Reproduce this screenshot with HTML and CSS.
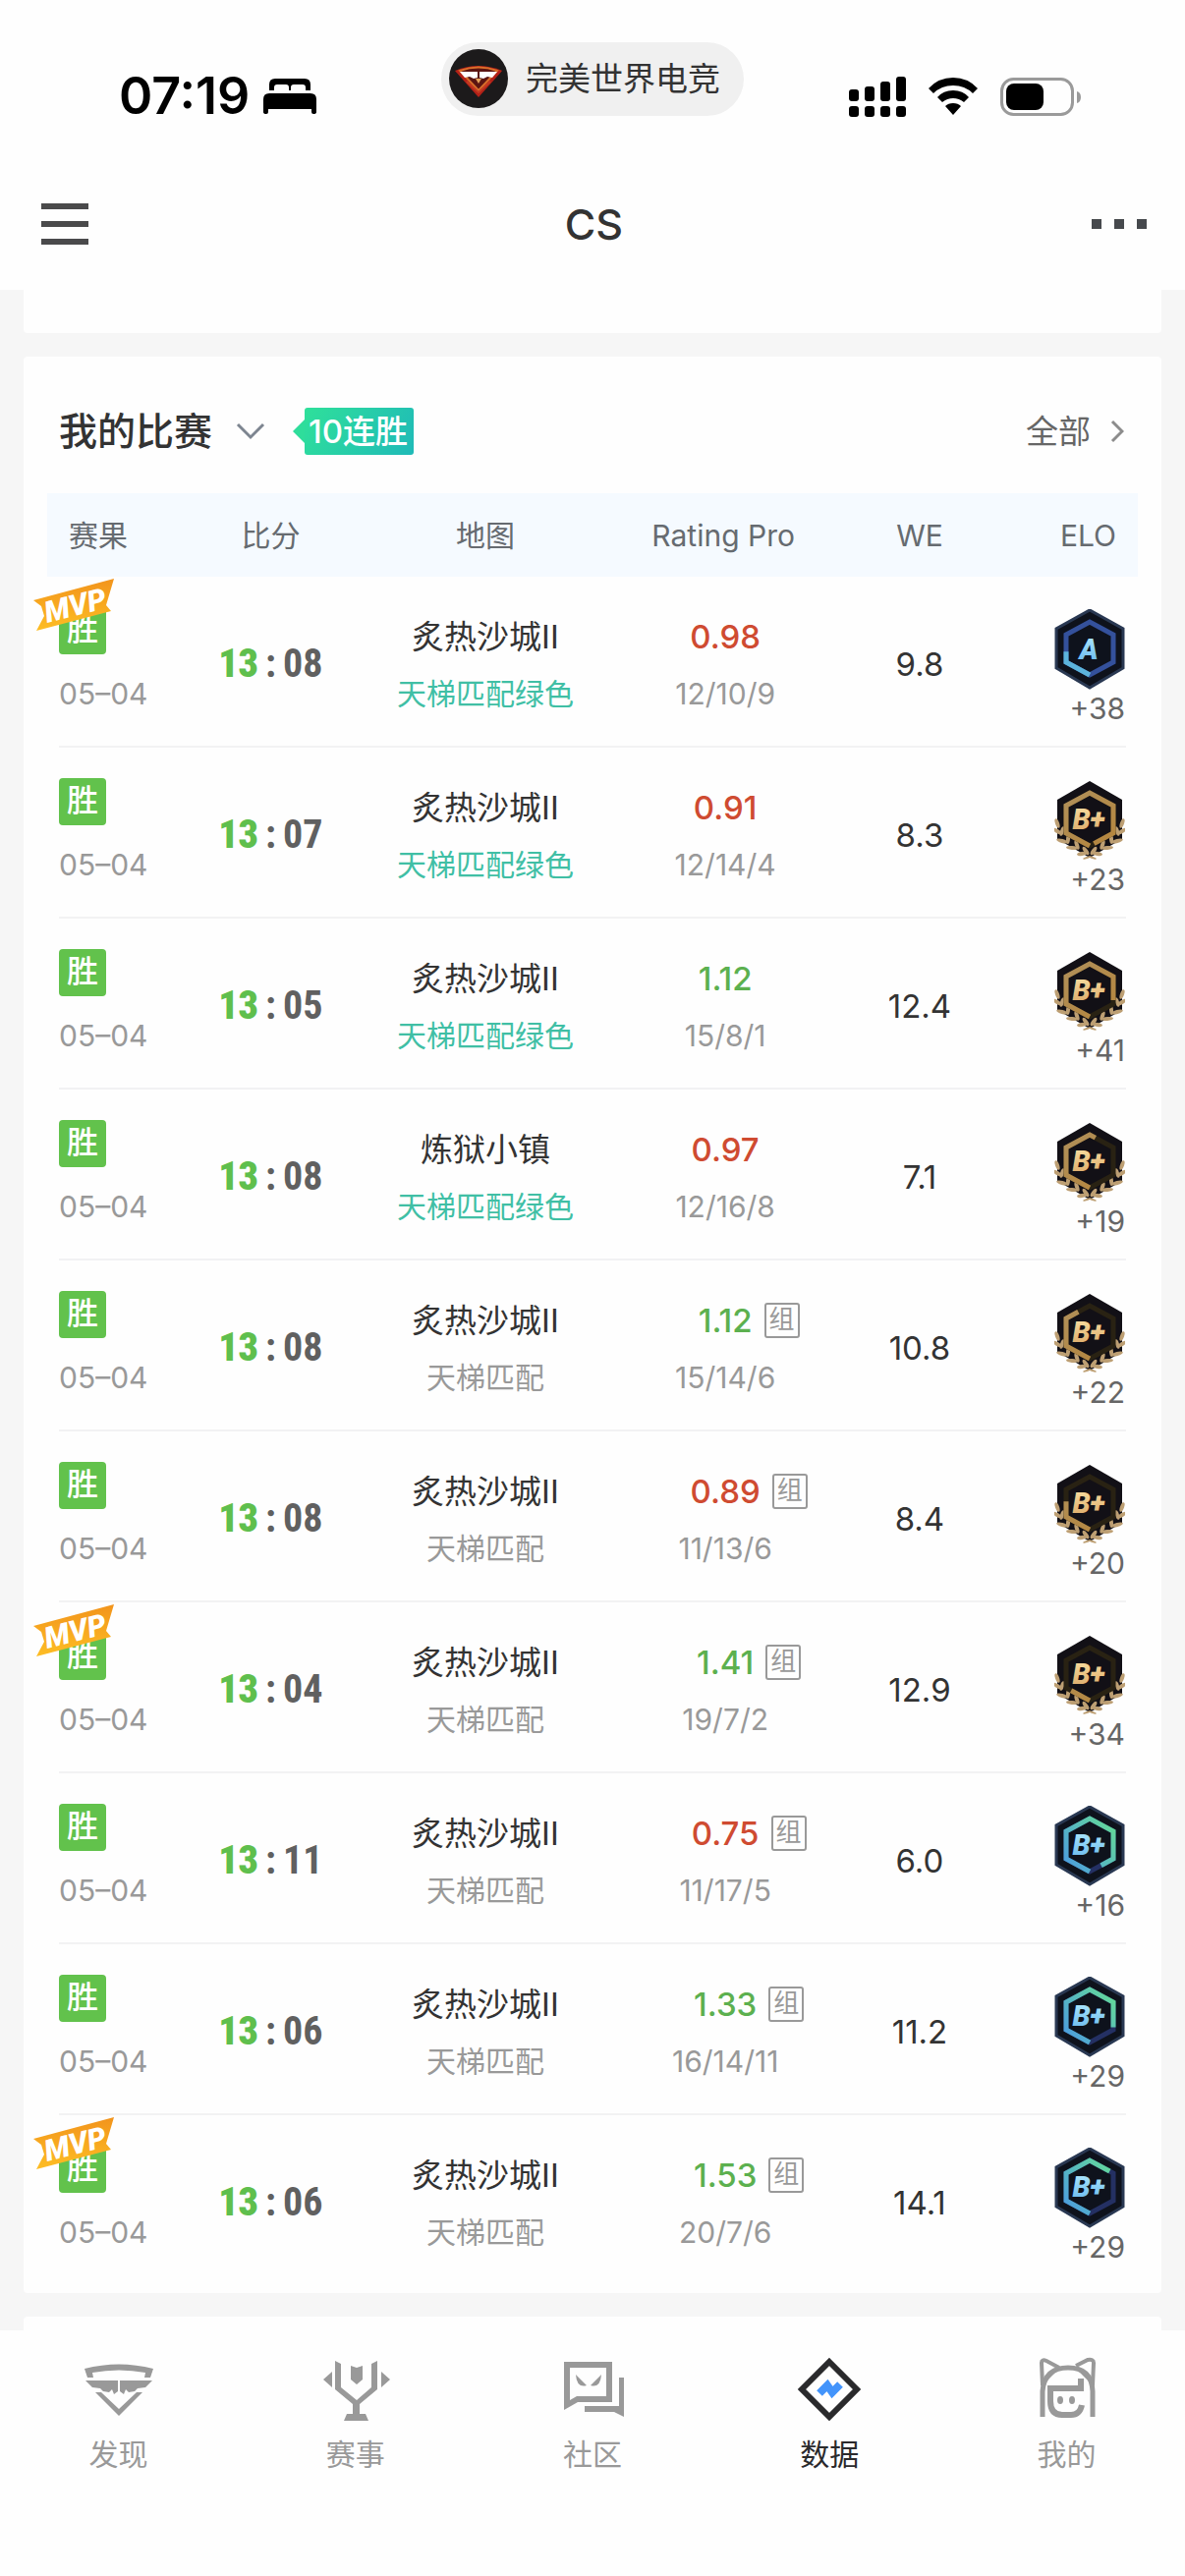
FILE: index.html
```html
<!DOCTYPE html>
<html lang="zh-CN">
<head>
<meta charset="utf-8">
<meta name="viewport" content="width=device-width, initial-scale=1">
<title>CS</title>
<link rel="stylesheet" href="styles.css">
</head>
<body>

<svg class="sprite" aria-hidden="true">
  <defs>
    <linearGradient id="ice" x1="0" y1="0" x2="0" y2="1"><stop offset="0" stop-color="#b4ecff"/><stop offset="1" stop-color="#62b4ec"/></linearGradient>
    <linearGradient id="gold" x1="0" y1="0" x2="0" y2="1"><stop offset="0" stop-color="#fbe3a6"/><stop offset="1" stop-color="#d9a463"/></linearGradient>
    <linearGradient id="ring-cool" gradientUnits="userSpaceOnUse" x1="14" y1="60" x2="60" y2="24"><stop offset="0" stop-color="#4d9fdc"/><stop offset="1" stop-color="#62d69c"/></linearGradient>
    <linearGradient id="ring-gold" gradientUnits="userSpaceOnUse" x1="12" y1="12" x2="60" y2="68"><stop offset="0" stop-color="#b0905a"/><stop offset="1" stop-color="#b5853c"/></linearGradient>
    <linearGradient id="ribbon" x1="0" y1="0" x2="0" y2="1"><stop offset="0" stop-color="#f2941c"/><stop offset="1" stop-color="#fdbd24"/></linearGradient>
    <symbol id="ring" viewBox="0 0 72 82"><path pathLength="100" d="M36 67L12 54V26L36 13L60 26V54Z" fill="none" stroke-width="5"/></symbol>
    <symbol id="hex-blue" viewBox="0 0 72 82"><path d="M36 1L70 20V60L36 80L2 60V20Z" fill="#0e121c" stroke="#293852" stroke-width="3"/></symbol>
    <symbol id="hex-gold" viewBox="0 0 72 82">
      <path d="M36 1L69 20V60L36 79L3 60V20Z" fill="#121016"/>
      <g id="laurel" fill="#bd9f73">
        <ellipse cx="3" cy="44" rx="2" ry="5" transform="rotate(-20 3 44)"/>
        <ellipse cx="3" cy="52" rx="2" ry="5" transform="rotate(-58 3 52)"/>
        <ellipse cx="8" cy="52" rx="2" ry="5" transform="rotate(18 8 52)"/>
        <ellipse cx="8" cy="62" rx="2" ry="6" transform="rotate(-75 8 62)"/>
        <ellipse cx="14" cy="60" rx="2" ry="5" transform="rotate(5 14 60)"/>
        <ellipse cx="18" cy="69" rx="2" ry="6" transform="rotate(-85 18 69)"/>
        <ellipse cx="23" cy="66" rx="2" ry="5" transform="rotate(-20 23 66)"/>
        <ellipse cx="28" cy="75" rx="2" ry="5" transform="rotate(-100 28 75)"/>
        <ellipse cx="32" cy="72" rx="2" ry="5" transform="rotate(-35 32 72)"/>
        <ellipse cx="33" cy="79" rx="1" ry="4" transform="rotate(70 33 79)"/>
      </g>
      <use href="#laurel" transform="translate(72 0) scale(-1 1)"/>
    </symbol>
    <symbol id="mvp" viewBox="0 0 82 54">
      <path d="M0 22L82 0L74 27L79 33L3 53L11 38L8 28Z" fill="url(#ribbon)"/>
      <text x="14" y="45" transform="rotate(-14 14 45)" font-family="Roboto, sans-serif" font-weight="900" font-style="italic" font-size="30" fill="#fff">MVP</text>
    </symbol>
  </defs>
</svg>

<header class="top">
  <div class="status">
    <div class="status-left">
      <span class="clock">07:19</span>
      <svg width="54" height="36" viewBox="0 0 54 36" aria-hidden="true"><path d="M6 12V6Q6 0 12 0H42Q48 0 48 6V12H43V9Q43 6 40 6H31Q28 6 28 9V12H26V9Q26 6 23 6H14Q11 6 11 9V12Z"/><path d="M0 21Q0 15 6 15H48Q54 15 54 21V34Q54 36 51 36Q49 36 49 34V31H5V34Q5 36 3 36Q0 36 0 34Z"/></svg>
    </div>
    <div class="pill">
      <svg width="60" height="60" viewBox="0 0 60 60" aria-hidden="true"><circle cx="30" cy="30" r="30" fill="#1c1a1b"/><path d="M6 22Q30 12 54 22L30 49Z" fill="#b32118"/><path d="M11 22Q30 15 49 22L30 42Z" fill="#5b1512" stroke="#d9702b" stroke-width="2"/><path d="M18 33L30 44L42 33" fill="none" stroke="#c23a22" stroke-width="2"/><path d="M11 23H29V29L25 30L21 28L16 29ZM49 23H31V29L35 30L39 28L44 29Z" fill="#fff"/><path d="M27 30L30 35L33 30Z" fill="#e5a35b"/></svg>
      <span>完美世界电竞</span>
    </div>
    <div class="status-right">
      <svg width="58" height="41" viewBox="0 0 58 41" aria-hidden="true"><rect y="13" width="10" height="12" rx="3"/><rect x="16" y="10" width="10" height="15" rx="3"/><rect x="32" y="5" width="10" height="20" rx="3"/><rect x="48" width="10" height="25" rx="3"/><rect y="30" width="10" height="11" rx="3"/><rect x="16" y="30" width="10" height="11" rx="3"/><rect x="32" y="30" width="10" height="11" rx="3"/><rect x="48" y="30" width="10" height="11" rx="3"/></svg>
      <svg width="50" height="38" viewBox="0 0 50 38" aria-hidden="true"><path d="M0 11Q10 0 25 0T50 11L45 16Q37 8 25 8T5 16ZM9 20Q15 13 25 13T41 20L36 25Q31 21 25 21T14 25ZM17 29Q20 26 25 26T33 29L25 38Z"/></svg>
      <svg width="82" height="39" viewBox="0 0 82 39" aria-hidden="true"><rect x="1.500" y="1.500" width="72" height="36" rx="12" fill="none" stroke="#9a9a9a" stroke-width="3"/><rect x="6" y="6" width="38" height="27" rx="8"/><path d="M78 14Q82 15 82 20T78 26Z" fill="#9a9a9a"/></svg>
    </div>
  </div>
  <nav class="navbar" aria-label="页面">
    <button class="icon-btn" type="button" aria-label="菜单"><svg width="48" height="42" viewBox="0 0 48 42"><path d="M0 3H48M0 21H48M0 39H48" stroke="#4a4a4b" stroke-width="6"/></svg></button>
    <h1>CS</h1>
    <button class="icon-btn more" type="button" aria-label="更多"><svg width="56" height="10" viewBox="0 0 56 10"><path d="M0 5H10M23 5H33M46 5H56" stroke="#46494d" stroke-width="10"/></svg></button>
  </nav>
</header>

<main>
  <section class="card card-prev"></section>

  <section class="card matches">
    <div class="matches-head">
      <button class="picker" type="button">我的比赛<svg width="30" height="18" viewBox="0 0 30 18" aria-hidden="true"><path d="M2 2L15 15L28 2" fill="none" stroke="#7d8590" stroke-width="3"/></svg></button>
      <span class="streak">10连胜</span>
      <a class="all" href="#all">全部<svg width="14" height="24" viewBox="0 0 14 24" aria-hidden="true"><path d="M2 2L12 12L2 22" fill="none" stroke="#8c8c8c" stroke-width="3"/></svg></a>
    </div>

    <table>
      <colgroup><col class="c-result"><col class="c-score"><col class="c-map"><col class="c-rating"><col class="c-we"><col class="c-elo"></colgroup>
      <thead>
        <tr><th class="result" scope="col">赛果</th><th scope="col">比分</th><th class="map" scope="col">地图</th><th scope="col">Rating Pro</th><th scope="col">WE</th><th class="elo" scope="col">ELO</th></tr>
      </thead>
      <tbody>
        <tr>
          <td class="result"><span class="win">胜<svg class="mvp"><use href="#mvp"/></svg></span><span class="sub">05–04</span></td>
          <td class="score"><span><b>13</b><i>:</i>08</span></td>
          <td class="map"><span class="name">炙热沙城II</span><span class="sub green-pool">天梯匹配绿色</span></td>
          <td class="rating"><span class="value low"><b>0.98</b></span><span class="sub">12/10/9</span></td>
          <td class="we">9.8</td>
          <td class="elo"><svg class="rank" viewBox="0 0 72 82"><use href="#hex-blue"/><use href="#ring" stroke="#34519c"/><use href="#ring" stroke="#5cb4dc" stroke-dasharray="23 100"/><text x="35" y="51" class="rank-text" fill="url(#ice)">A</text></svg><span class="delta">+38</span></td>
        </tr>
        <tr>
          <td class="result"><span class="win">胜</span><span class="sub">05–04</span></td>
          <td class="score"><span><b>13</b><i>:</i>07</span></td>
          <td class="map"><span class="name">炙热沙城II</span><span class="sub green-pool">天梯匹配绿色</span></td>
          <td class="rating"><span class="value low"><b>0.91</b></span><span class="sub">12/14/4</span></td>
          <td class="we">8.3</td>
          <td class="elo"><svg class="rank" viewBox="0 0 72 82"><use href="#hex-gold"/><use href="#ring" stroke="#292213"/><use href="#ring" stroke="url(#ring-gold)" stroke-dasharray="97 100"/><text x="35" y="50" class="rank-text" fill="url(#gold)">B+</text></svg><span class="delta">+23</span></td>
        </tr>
        <tr>
          <td class="result"><span class="win">胜</span><span class="sub">05–04</span></td>
          <td class="score"><span><b>13</b><i>:</i>05</span></td>
          <td class="map"><span class="name">炙热沙城II</span><span class="sub green-pool">天梯匹配绿色</span></td>
          <td class="rating"><span class="value high"><b>1.12</b></span><span class="sub">15/8/1</span></td>
          <td class="we">12.4</td>
          <td class="elo"><svg class="rank" viewBox="0 0 72 82"><use href="#hex-gold"/><use href="#ring" stroke="#292213"/><use href="#ring" stroke="url(#ring-gold)" stroke-dasharray="81 100"/><text x="35" y="50" class="rank-text" fill="url(#gold)">B+</text></svg><span class="delta">+41</span></td>
        </tr>
        <tr>
          <td class="result"><span class="win">胜</span><span class="sub">05–04</span></td>
          <td class="score"><span><b>13</b><i>:</i>08</span></td>
          <td class="map"><span class="name">炼狱小镇</span><span class="sub green-pool">天梯匹配绿色</span></td>
          <td class="rating"><span class="value low"><b>0.97</b></span><span class="sub">12/16/8</span></td>
          <td class="we">7.1</td>
          <td class="elo"><svg class="rank" viewBox="0 0 72 82"><use href="#hex-gold"/><use href="#ring" stroke="#292213"/><use href="#ring" stroke="url(#ring-gold)" stroke-dasharray="54 100"/><text x="35" y="50" class="rank-text" fill="url(#gold)">B+</text></svg><span class="delta">+19</span></td>
        </tr>
        <tr>
          <td class="result"><span class="win">胜</span><span class="sub">05–04</span></td>
          <td class="score"><span><b>13</b><i>:</i>08</span></td>
          <td class="map"><span class="name">炙热沙城II</span><span class="sub">天梯匹配</span></td>
          <td class="rating"><span class="value high"><b>1.12</b><em>组</em></span><span class="sub">15/14/6</span></td>
          <td class="we">10.8</td>
          <td class="elo"><svg class="rank" viewBox="0 0 72 82"><use href="#hex-gold"/><use href="#ring" stroke="#292213"/><use href="#ring" stroke="url(#ring-gold)" stroke-dasharray="42 100"/><text x="35" y="50" class="rank-text" fill="url(#gold)">B+</text></svg><span class="delta">+22</span></td>
        </tr>
        <tr>
          <td class="result"><span class="win">胜</span><span class="sub">05–04</span></td>
          <td class="score"><span><b>13</b><i>:</i>08</span></td>
          <td class="map"><span class="name">炙热沙城II</span><span class="sub">天梯匹配</span></td>
          <td class="rating"><span class="value low"><b>0.89</b><em>组</em></span><span class="sub">11/13/6</span></td>
          <td class="we">8.4</td>
          <td class="elo"><svg class="rank" viewBox="0 0 72 82"><use href="#hex-gold"/><use href="#ring" stroke="#292213"/><use href="#ring" stroke="url(#ring-gold)" stroke-dasharray="26 100"/><text x="35" y="50" class="rank-text" fill="url(#gold)">B+</text></svg><span class="delta">+20</span></td>
        </tr>
        <tr>
          <td class="result"><span class="win">胜<svg class="mvp"><use href="#mvp"/></svg></span><span class="sub">05–04</span></td>
          <td class="score"><span><b>13</b><i>:</i>04</span></td>
          <td class="map"><span class="name">炙热沙城II</span><span class="sub">天梯匹配</span></td>
          <td class="rating"><span class="value high"><b>1.41</b><em>组</em></span><span class="sub">19/7/2</span></td>
          <td class="we">12.9</td>
          <td class="elo"><svg class="rank" viewBox="0 0 72 82"><use href="#hex-gold"/><use href="#ring" stroke="#292213"/><use href="#ring" stroke="url(#ring-gold)" stroke-dasharray="13 100"/><text x="35" y="50" class="rank-text" fill="url(#gold)">B+</text></svg><span class="delta">+34</span></td>
        </tr>
        <tr>
          <td class="result"><span class="win">胜</span><span class="sub">05–04</span></td>
          <td class="score"><span><b>13</b><i>:</i>11</span></td>
          <td class="map"><span class="name">炙热沙城II</span><span class="sub">天梯匹配</span></td>
          <td class="rating"><span class="value low"><b>0.75</b><em>组</em></span><span class="sub">11/17/5</span></td>
          <td class="we">6.0</td>
          <td class="elo"><svg class="rank" viewBox="0 0 72 82"><use href="#hex-blue"/><use href="#ring" stroke="#243063"/><use href="#ring" stroke="url(#ring-cool)" stroke-dasharray="92 100"/><text x="35" y="50" class="rank-text" fill="url(#ice)">B+</text></svg><span class="delta">+16</span></td>
        </tr>
        <tr>
          <td class="result"><span class="win">胜</span><span class="sub">05–04</span></td>
          <td class="score"><span><b>13</b><i>:</i>06</span></td>
          <td class="map"><span class="name">炙热沙城II</span><span class="sub">天梯匹配</span></td>
          <td class="rating"><span class="value high"><b>1.33</b><em>组</em></span><span class="sub">16/14/11</span></td>
          <td class="we">11.2</td>
          <td class="elo"><svg class="rank" viewBox="0 0 72 82"><use href="#hex-blue"/><use href="#ring" stroke="#243063"/><use href="#ring" stroke="url(#ring-cool)" stroke-dasharray="82 100"/><text x="35" y="50" class="rank-text" fill="url(#ice)">B+</text></svg><span class="delta">+29</span></td>
        </tr>
        <tr>
          <td class="result"><span class="win">胜<svg class="mvp"><use href="#mvp"/></svg></span><span class="sub">05–04</span></td>
          <td class="score"><span><b>13</b><i>:</i>06</span></td>
          <td class="map"><span class="name">炙热沙城II</span><span class="sub">天梯匹配</span></td>
          <td class="rating"><span class="value high"><b>1.53</b><em>组</em></span><span class="sub">20/7/6</span></td>
          <td class="we">14.1</td>
          <td class="elo"><svg class="rank" viewBox="0 0 72 82"><use href="#hex-blue"/><use href="#ring" stroke="#243063"/><use href="#ring" stroke="url(#ring-cool)" stroke-dasharray="64 100"/><text x="35" y="50" class="rank-text" fill="url(#ice)">B+</text></svg><span class="delta">+29</span></td>
        </tr>
      </tbody>
    </table>
  </section>

  <section class="card card-next"></section>
</main>

<nav class="tabs" aria-label="主导航">
  <a href="#discover"><svg viewBox="0 0 72 72" aria-hidden="true"><path d="M1 15Q36 6 71 15L68 24H62L63 19Q36 14 9 19L10 24H4ZM2 27H35V38L31 41L29 36L26 39L20 38L17 35L9 34ZM70 27H37V38L41 41L43 36L46 39L52 38L55 35L63 34ZM12 39H18L36 56L54 39H60L36 63Z"/></svg>发现</a>
  <a href="#events"><svg viewBox="0 0 72 72" aria-hidden="true"><path d="M15 7L21 10V34L37 47L52 34V10L58 7V36L40 51V61H46L49 68H24L27 61H33V51L15 36ZM31 12L37 14L43 12V26L37 31L31 26ZM3 26L12 18V34ZM71 26L62 18V34Z"/></svg>赛事</a>
  <a href="#community"><svg viewBox="0 0 72 72" aria-hidden="true"><path fill-rule="evenodd" d="M7 8H56V49H21L7 57ZM13 14V47L20 43H50V14ZM19 21L30 32Q20 35 19 21ZM45 21L34 32Q44 35 45 21ZM63 24H68V64L58 59H28V53H63Z"/></svg>社区</a>
  <a class="active" href="#data" aria-current="page"><svg viewBox="0 0 72 72" aria-hidden="true"><path d="M36 8L64 36L36 64L8 36Z" fill="none" stroke="#2a2a2c" stroke-width="6"/><path d="M26 40L34 32L39 39L47 31" fill="none" stroke="#4394fb" stroke-width="8"/></svg>数据</a>
  <a href="#me"><svg viewBox="0 0 72 72" aria-hidden="true"><g fill="none" stroke="#999" stroke-width="5"><path d="M12 64V38Q14 14 38 14T63 38V64"/><path d="M12 32L11 9Q11 5 16 7L29 14M63 32L64 9Q64 5 58 6L46 12M16 25L25 16M59 25L50 16" stroke-width="4"/><path d="M51 25V35H20V48Q20 62 32 62H41Q50 62 52 52" stroke-width="6"/></g><ellipse cx="30" cy="47" rx="3" ry="4"/><ellipse cx="42" cy="47" rx="3" ry="4"/></svg>我的</a>
</nav>

</body>
</html>
```
FILE: styles.css
```css
* { box-sizing: border-box; }

body {
  margin: 0;
  min-height: 100vh;
  display: flex;
  flex-direction: column;
  background: #f6f6f6;
  color: #333;
  font-family: Inter, "Noto Sans CJK SC", sans-serif;
  font-size: 30px;
  line-height: 36px;
}

button {
  border: 0;
  padding: 0;
  background: none;
  color: inherit;
  font: inherit;
}

a { color: inherit; text-decoration: none; }
svg { display: block; }
.sprite { position: absolute; width: 0; height: 0; }

/* status bar and title */
.top { background: #fefefe; }

.status {
  display: grid;
  grid-template-columns: 1fr auto 1fr;
  align-items: center;
  height: 160px;
}

.status-left,
.status-right {
  display: flex;
  align-items: center;
  padding-top: 36px;
}

.status-left { gap: 14px; padding-left: 121px; }
.status-right { gap: 23px; justify-content: flex-end; padding-right: 106px; }

.clock {
  color: #000;
  font-size: 52px;
  font-weight: 600;
  line-height: 60px;
}

.pill {
  display: flex;
  align-items: center;
  gap: 18px;
  height: 75px;
  padding: 0 24px 0 8px;
  border-radius: 38px;
  background: #f0f0f0;
  font-size: 33px;
}

.navbar {
  display: grid;
  grid-template-columns: 1fr auto 1fr;
  align-items: center;
  height: 135px;
  padding: 0 39px 0 42px;
}

.navbar h1 {
  margin: 0;
  font-size: 43px;
  font-weight: 500;
  line-height: 48px;
}

.icon-btn { justify-self: start; }
.more { justify-self: end; }

/* cards */
main {
  display: flex;
  flex-direction: column;
  gap: 24px;
  padding: 0 24px;
}

.card { background: #fefefe; border-radius: 4px; }
.card-prev { height: 44px; border-radius: 0 0 4px 4px; }
.card-next { height: 14px; border-radius: 4px 4px 0 0; }

.matches { padding: 0 24px 7px; }

.matches-head {
  display: flex;
  align-items: center;
  height: 139px;
  padding: 12px 14px 0 12px;
}

.picker {
  display: flex;
  align-items: center;
  gap: 24px;
  font-size: 39px;
  font-weight: 500;
  line-height: 48px;
}

.streak {
  position: relative;
  height: 48px;
  margin-left: 40px;
  padding: 0 6px 0 4px;
  border-radius: 3px;
  background: linear-gradient(120deg, #2fe09a, #1fbab8);
  color: #fff;
  font-size: 33px;
  font-weight: 500;
  line-height: 48px;
}

.streak::before {
  content: "";
  position: absolute;
  right: 100%;
  top: 12px;
  border: 12px solid transparent;
  border-left-width: 0;
  border-right-color: #2fdd9b;
}

.all {
  display: flex;
  align-items: center;
  gap: 20px;
  margin-left: auto;
  color: #666;
  font-size: 33px;
}

/* match table */
table {
  width: 100%;
  border-collapse: collapse;
  table-layout: fixed;
}

.c-result { width: 12%; }
.c-score { width: 17%; }
.c-map { width: 22%; }
.c-rating { width: 22%; }
.c-we { width: 14%; }
.c-elo { width: 13%; }

th {
  height: 85px;
  padding: 0;
  background: #f5faff;
  color: #666b70;
  font-weight: 400;
  text-align: center;
}

th.result { padding-left: 22px; text-align: left; }
th.elo { padding-right: 22px; text-align: right; }

tbody tr {
  background: linear-gradient(#f2f2f3, #f2f2f3) center bottom / calc(100% - 24px) 2px no-repeat;
}

tbody tr:last-child { background: none; }

td {
  height: 174px;
  padding: 31px 0 0;
  text-align: center;
  vertical-align: top;
}

td.result { padding-left: 12px; text-align: left; }
td.elo { padding-right: 13px; text-align: right; }
td.score, td.we { padding-top: 4px; vertical-align: middle; }
.map, .rating { padding-left: 4px; }

.sub {
  display: block;
  margin-top: 10px;
  color: #999;
}

.green-pool { color: #40bfa5; }

.win {
  position: relative;
  display: block;
  width: 48px;
  height: 48px;
  margin-bottom: 22px;
  border-radius: 4px;
  background: #62c24c;
  color: #fff;
  font-size: 32px;
  font-weight: 500;
  line-height: 46px;
  text-align: center;
}

.win + .sub { margin-top: 0; }

.mvp {
  position: absolute;
  left: -26px;
  top: -29px;
  width: 82px;
  height: 54px;
}

.score span {
  display: grid;
  grid-template-columns: 1fr auto 1fr;
  column-gap: 7px;
  color: #606060;
  font-family: "Roboto Condensed", "Liberation Sans Narrow", Roboto, sans-serif;
  font-size: 40px;
  font-weight: 700;
  line-height: 48px;
  text-align: left;
}

.score b { color: #5fbf4d; text-align: right; }
.score i { font-style: normal; }

.name,
.value {
  display: block;
  font-size: 33px;
  line-height: 60px;
}

.value {
  display: grid;
  grid-template-columns: 1fr auto 1fr;
  column-gap: 12px;
  align-items: center;
}

.value b { grid-column: 2; font-weight: 500; }
.low { color: #cf4b31; }
.high { color: #5cb04f; }

.value em {
  justify-self: start;
  width: 36px;
  height: 36px;
  border: 2px solid #999;
  border-radius: 3px;
  color: #999;
  font-size: 26px;
  font-style: normal;
  line-height: 30px;
  text-align: center;
}

.we { font-size: 33px; }

.rank {
  width: 72px;
  height: 82px;
  margin: 2px 0 1px auto;
}

.rank-text {
  font-family: Roboto, sans-serif;
  font-size: 29px;
  font-style: italic;
  font-weight: 900;
  text-anchor: middle;
}

.delta { display: block; color: #666; }

/* bottom tabs */
.tabs {
  display: grid;
  grid-template-columns: repeat(5, 1fr);
  flex: 1;
  min-height: 250px;
  padding: 24px 0 100px;
  background: #fefefe;
}

.tabs a {
  display: flex;
  flex-direction: column;
  align-items: center;
  gap: 12px;
  color: #999;
}

.tabs svg { width: 72px; height: 72px; fill: #999; }
.tabs .active { color: #2a2a2c; }
```
